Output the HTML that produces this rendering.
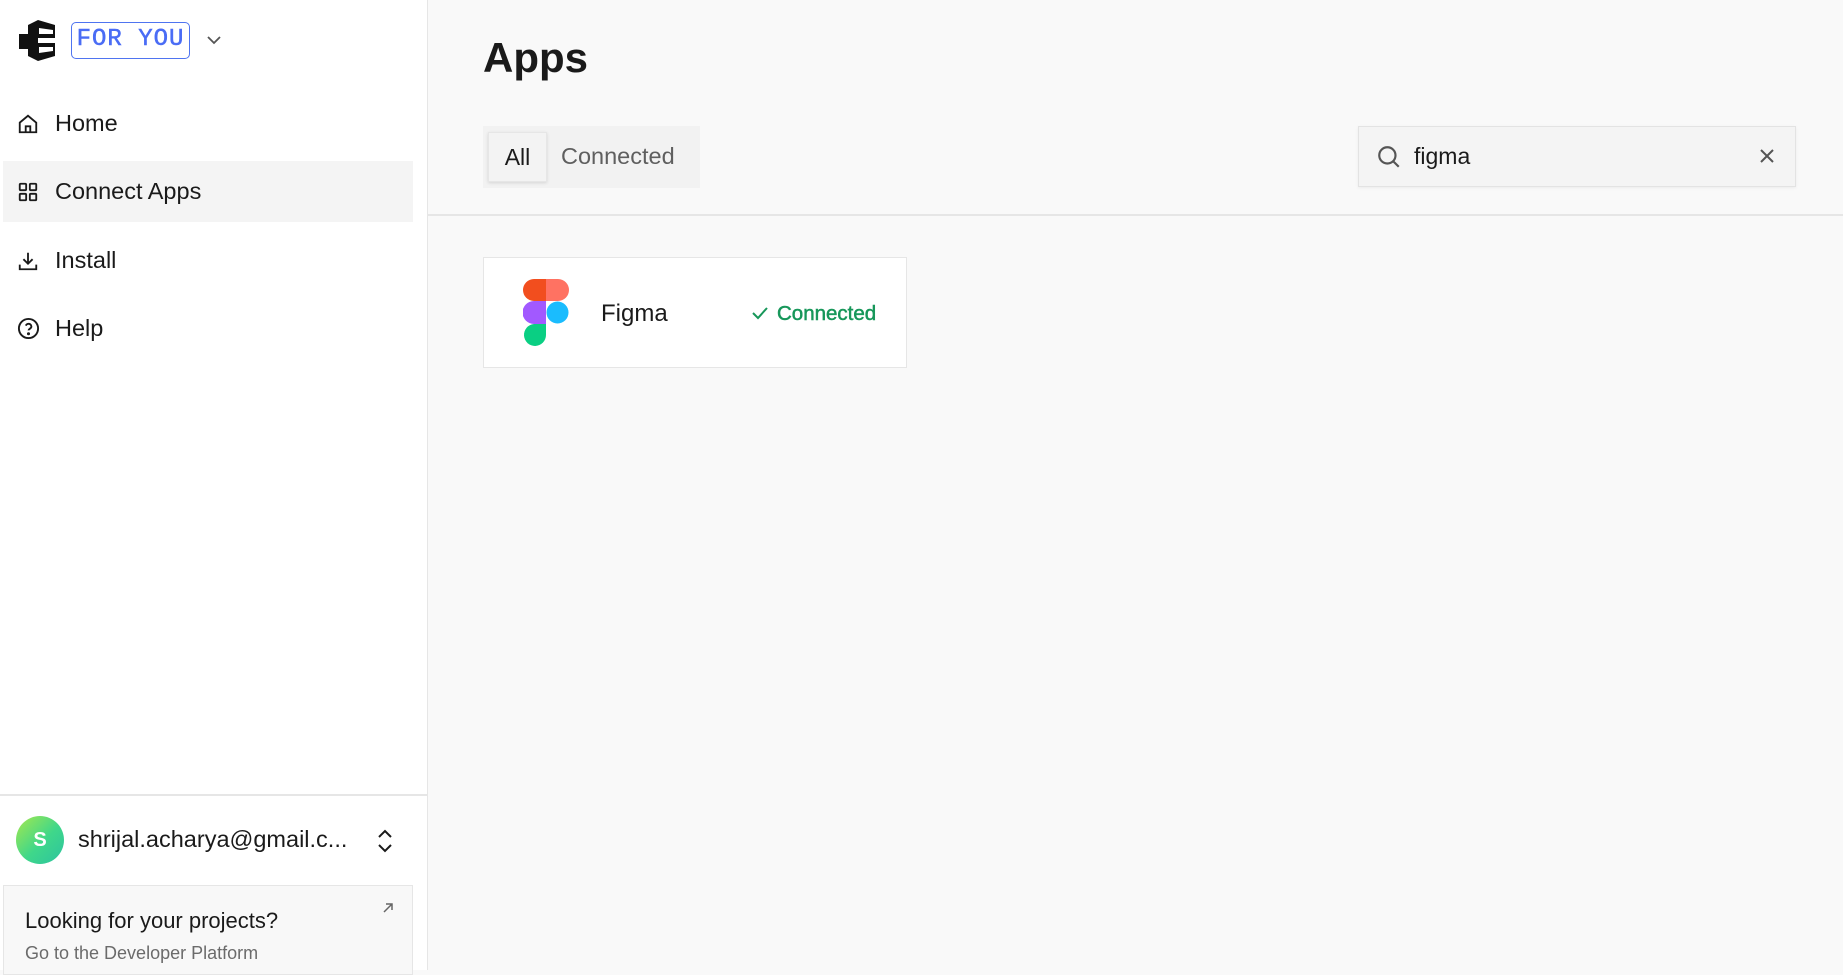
<!DOCTYPE html>
<html><head><meta charset="utf-8"><style>
*{margin:0;padding:0;box-sizing:border-box}
body{width:1843px;height:970px;overflow:hidden;font-family:"Liberation Sans",sans-serif;background:#f9f9f9;color:#1a1a1a;position:relative}
.side{position:absolute;left:0;top:0;width:428px;height:970px;background:#fff;border-right:1px solid #e6e6e6}
.abs{position:absolute}
.nav{position:absolute;left:3px;width:410px;height:61px;display:flex;align-items:center;font-size:23.5px;color:#1a1a1a}
.nav svg{position:absolute;left:14px}
.nav span{position:absolute;left:52px}
</style></head><body>
<div class="side">
  <svg class="abs" style="left:18px;top:19px" width="38" height="43" viewBox="0 0 38 43">
    <path d="M1 15h9v15H1z" fill="#111"/>
    <path d="M10 6 L20 1 L37 6 L37 19 L20 19 L20 24 L37 24 L37 37 L20 42 L10 37 Z" fill="#111"/>
    <path d="M21 9 L35 11 L35 15 L21 15Z M21 28 L35 28 L35 32 L21 34Z" fill="#fff"/>
  </svg>
  <div class="abs" style="left:71px;top:22px;width:119px;height:37px;border:1.5px solid #4f74f0;border-radius:5px;color:#4a6cf5;font-family:'Liberation Mono',monospace;font-size:24px;letter-spacing:1px;text-align:center;line-height:34px;-webkit-text-stroke:0.5px #4a6cf5">FOR YOU</div>
  <svg class="abs" style="left:206px;top:32px" width="16" height="16" viewBox="0 0 16 16"><path d="M2 5l6 6 6-6" fill="none" stroke="#555" stroke-width="1.8"/></svg>

  <div class="nav" style="top:93px"><svg width="22" height="22" viewBox="0 0 24 24" fill="none" stroke="#1a1a1a" stroke-width="2"><path d="M3 10.5L12 3l9 7.5V21H3z M9.5 21v-6.5h5V21"/></svg><span>Home</span></div>
  <div class="nav" style="top:161px;background:#f4f4f4"><svg width="22" height="22" viewBox="0 0 24 24" fill="none" stroke="#1a1a1a" stroke-width="2"><rect x="3" y="3" width="7" height="7" rx="1"/><rect x="14" y="3" width="7" height="7" rx="1"/><rect x="3" y="14" width="7" height="7" rx="1"/><rect x="14" y="14" width="7" height="7" rx="1"/></svg><span>Connect Apps</span></div>
  <div class="nav" style="top:230px"><svg width="22" height="22" viewBox="0 0 24 24" fill="none" stroke="#1a1a1a" stroke-width="2"><path d="M12 3v12M7 10l5 5 5-5M3 16v5h18v-5"/></svg><span>Install</span></div>
  <div class="nav" style="top:298px"><svg width="23" height="23" viewBox="0 0 24 24" fill="none" stroke="#1a1a1a" stroke-width="2"><circle cx="12" cy="12" r="10"/><path d="M9.2 9a3 3 0 0 1 5.8 1c0 2-3 2.5-3 4"/><circle cx="12" cy="17.5" r=".6" fill="#1a1a1a"/></svg><span>Help</span></div>

  <div class="abs" style="left:0;top:794px;width:427px;height:1.5px;background:#e6e6e6"></div>
  <div class="abs" style="left:16px;top:816px;width:48px;height:48px;border-radius:50%;background:linear-gradient(135deg,#a6e84d,#3fd78a 55%,#2cc3a0);color:#fff;font-size:20px;font-weight:bold;text-align:center;line-height:48px">S</div>
  <div class="abs" style="left:78px;top:826px;font-size:23.5px;color:#1a1a1a">shrijal.acharya@gmail.c...</div>
  <svg class="abs" style="left:375px;top:828px" width="20" height="26" viewBox="0 0 20 26"><path d="M4 9l6-6 6 6M4 17l6 6 6-6" fill="none" stroke="#1a1a1a" stroke-width="2"/></svg>
  <div class="abs" style="left:3px;top:885px;width:410px;height:90px;background:#f8f8f8;border:1.5px solid #e6e6e6">
    <div class="abs" style="left:21px;top:22px;font-size:22px;color:#1a1a1a">Looking for your projects?</div>
    <div class="abs" style="left:21px;top:57px;font-size:18px;color:#6b6b6b">Go to the Developer Platform</div>
    <svg class="abs" style="left:377px;top:15px" width="14" height="14" viewBox="0 0 14 14"><path d="M3 11L11 3M5 3h6v6" fill="none" stroke="#666" stroke-width="1.5"/></svg>
  </div>
</div>

<div class="abs" style="left:483px;top:34px;font-size:42px;font-weight:bold;color:#1a1a1a">Apps</div>
<div class="abs" style="left:483px;top:126px;width:217px;height:62px;background:#f2f2f2"></div>
<div class="abs" style="left:488px;top:132px;width:59px;height:50px;background:#f3f3f3;border:1px solid #e6e6e6;box-shadow:0 1px 3px rgba(0,0,0,.12);font-size:23px;text-align:center;line-height:48px;color:#1a1a1a">All</div>
<div class="abs" style="left:561px;top:143px;font-size:23.5px;color:#5f5f5f">Connected</div>

<div class="abs" style="left:1358px;top:126px;width:438px;height:61px;background:#f4f4f4;border:1px solid #e3e3e3;box-shadow:0 1px 3px rgba(0,0,0,.06)"></div>
<svg class="abs" style="left:1376px;top:144px" width="26" height="26" viewBox="0 0 24 24" fill="none" stroke="#555" stroke-width="2"><circle cx="10.5" cy="10.5" r="7.5"/><path d="M16 16l5 5"/></svg>
<div class="abs" style="left:1414px;top:143px;font-size:23px;color:#1a1a1a">figma</div>
<svg class="abs" style="left:1758px;top:147px" width="18" height="18" viewBox="0 0 18 18"><path d="M3 3l12 12M15 3L3 15" stroke="#555" stroke-width="2"/></svg>

<div class="abs" style="left:428px;top:214px;width:1415px;height:1.5px;background:#e6e6e6"></div>

<div class="abs" style="left:483px;top:257px;width:424px;height:111px;background:#fff;border:1.5px solid #e6e6e6"></div>
<svg class="abs" style="left:523px;top:279px" width="46" height="68" viewBox="0 0 46 68">
  <path d="M11 0h12v22H11A11 11 0 0 1 11 0z" fill="#f24e1e"/>
  <path d="M23 0h12a11 11 0 0 1 0 22H23z" fill="#ff7262"/>
  <path d="M11 22h12v23H11a11.5 11.5 0 0 1 0-23z" fill="#a259ff"/>
  <circle cx="34.5" cy="33.5" r="11" fill="#1abcfe"/>
  <path d="M11 45h12v11a11 11 0 1 1-12-11z" fill="#0acf83"/>
</svg>
<div class="abs" style="left:601px;top:300px;font-size:24px;color:#1a1a1a">Figma</div>
<svg class="abs" style="left:751px;top:305px" width="18" height="16" viewBox="0 0 18 16"><path d="M2 8l5 5L16 3" fill="none" stroke="#17975a" stroke-width="2"/></svg>
<div class="abs" style="left:777px;top:302px;font-size:20.5px;color:#17975a;-webkit-text-stroke:0.5px #17975a">Connected</div>
</body></html>
